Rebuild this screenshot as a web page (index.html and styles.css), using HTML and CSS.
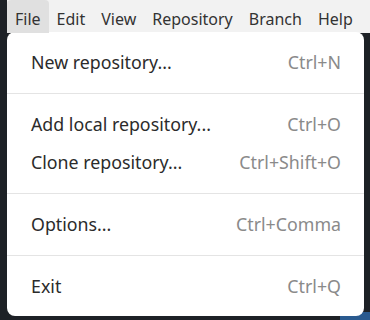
FILE: index.html
```html
<!DOCTYPE html>
<html lang="en">
<head>
  <meta charset="UTF-8">
  <meta name="viewport" content="width=device-width, initial-scale=1.0">
  <title>File menu</title>
  <link rel="stylesheet" href="styles.css">
</head>
<body>
  <div class="app">
    <nav class="menubar">
      <span class="menubar-item active">File</span>
      <span class="menubar-item">Edit</span>
      <span class="menubar-item">View</span>
      <span class="menubar-item">Repository</span>
      <span class="menubar-item">Branch</span>
      <span class="menubar-item">Help</span>
    </nav>

    <div class="menu">
      <div class="menu-item">
        <span class="label">New repository...</span>
        <span class="shortcut">Ctrl+N</span>
      </div>
      <div class="separator"></div>
      <div class="menu-item">
        <span class="label">Add local repository...</span>
        <span class="shortcut">Ctrl+O</span>
      </div>
      <div class="menu-item">
        <span class="label">Clone repository...</span>
        <span class="shortcut">Ctrl+Shift+O</span>
      </div>
      <div class="separator"></div>
      <div class="menu-item">
        <span class="label">Options...</span>
        <span class="shortcut">Ctrl+Comma</span>
      </div>
      <div class="separator"></div>
      <div class="menu-item">
        <span class="label">Exit</span>
        <span class="shortcut">Ctrl+Q</span>
      </div>
    </div>
  </div>
</body>
</html>
```

FILE: styles.css
```css
body {
  margin: 0;
  padding: 0;
  background-color: #1d2126;
  font-family: 'Noto Sans', 'Open Sans', sans-serif;
  font-size: 16px;
  overflow: hidden;
}
.app {
  padding-left: 7px;
  height: 320px;
  background: linear-gradient(to right, transparent 340px, #2a5a8f 340px) bottom / 100% 8px no-repeat;
}
.menubar {
  display: flex;
  height: 33px;
  background-color: #f2f2f2;
}
.menubar-item {
  display: flex;
  align-items: center;
  padding: 4px 8px 0;
  color: #333;
  line-height: 20px;
}
.menubar-item.active {
  background-color: #e0e0e0;
  border-radius: 4px 4px 0 0;
}
.menu {
  width: 357px;
  background-color: white;
  border-radius: 8px;
  padding: 11px 0;
  box-sizing: border-box;
  margin-top: -1px;
  font-size: 17.8px;
}
.menu-item {
  display: flex;
  justify-content: space-between;
  align-items: center;
  height: 38px;
  padding: 0 23px 0 24px;
  color: #2b2b2b;
}
.shortcut {
  color: #8a8a8a;
}
.separator {
  height: 1px;
  background-color: #e4e4e4;
  margin: 12px 0 11px;
}
```
